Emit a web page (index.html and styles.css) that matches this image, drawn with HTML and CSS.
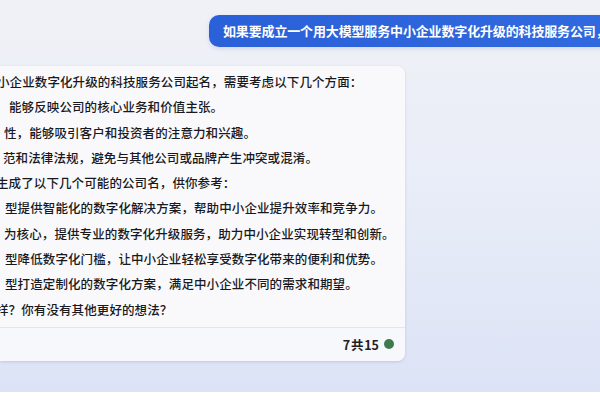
FILE: index.html
```html
<!DOCTYPE html>
<html lang="zh-CN">
<head>
<meta charset="utf-8">
<link rel="stylesheet" href="styles.css">
</head>
<body>
<div class="page">
  <div class="user-row">
    <div class="bubble">如果要成立一个用大模型服务中小企业数字化升级的科技服务公司，请帮我起名</div>
  </div>
  <div class="card">
    <div class="card-body">
      <p class="ln o-m3">小企业数字化升级的科技服务公司起名，需要考虑以下几个方面：</p>
      <p class="ln o-9">能够反映公司的核心业务和价值主张。</p>
      <p class="ln o-4">性，能够吸引客户和投资者的注意力和兴趣。</p>
      <p class="ln o-3">范和法律法规，避免与其他公司或品牌产生冲突或混淆。</p>
      <p class="ln o-m4">生成了以下几个可能的公司名，供你参考：</p>
      <p class="ln o-5">型提供智能化的数字化解决方案，帮助中小企业提升效率和竞争力。</p>
      <p class="ln o-4">为核心，提供专业的数字化升级服务，助力中小企业实现转型和创新。</p>
      <p class="ln o-5">型降低数字化门槛，让中小企业轻松享受数字化带来的便利和优势。</p>
      <p class="ln o-5">型打造定制化的数字化方案，满足中小企业不同的需求和期望。</p>
      <p class="ln o-m4">样？你有没有其他更好的想法？</p>
    </div>
    <div class="card-foot">
      <span class="count">7 共 15</span>
      <span class="dot"></span>
    </div>
  </div>
</div>
</body>
</html>
```

FILE: styles.css
```css
html, body {
  margin: 0;
  padding: 0;
  background: #ffffff;
}
body {
  width: 600px;
  height: 400px;
  overflow: hidden;
  font-family: "Noto Sans CJK SC", "Noto Sans", sans-serif;
}
.page {
  height: 392px;
  overflow: hidden;
  background: linear-gradient(180deg, #f0f1f6 0%, #e9edf8 45%, #dce3f6 100%);
}
.user-row {
  padding-top: 15px;
  padding-left: 209px;
}
.bubble {
  height: 32px;
  line-height: 32px;
  padding-left: 14px;
  white-space: nowrap;
  color: #ffffff;
  font-size: 13px;
  font-weight: 700;
  letter-spacing: -0.15px;
  width: 600px;
  border-radius: 10px;
  background: linear-gradient(90deg, #2b61d8 0%, #336ce2 100%);
  box-shadow: 0 2px 4px rgba(40, 80, 180, 0.15);
}
.card {
  margin-top: 19px;
  width: 405px;
  height: 295px;
  background: #f9f9fc;
  border-radius: 0 8px 8px 0;
  box-shadow: 0 1px 3px rgba(60, 70, 110, 0.18);
  display: flex;
  flex-direction: column;
  overflow: hidden;
}
.card-body {
  padding: 3px 0 5px 0;
  flex: 1;
}
.ln {
  margin: 0;
  white-space: nowrap;
  font-size: 12.5px;
  letter-spacing: 0.1px;
  line-height: 25.3px;
  color: #18191e;
  font-weight: 500;
}
.o-m3 { margin-left: -3px; }
.o-m4 { margin-left: -4px; }
.o-3 { margin-left: 3px; }
.o-4 { margin-left: 4px; }
.o-5 { margin-left: 5px; }
.o-9 { margin-left: 9px; }
.card-foot {
  height: 34px;
  border-top: 1px solid #e3e6ee;
  display: flex;
  justify-content: flex-end;
  align-items: center;
  gap: 5px;
  padding-right: 11px;
  background: #f7f8fb;
}
.count {
  font-family: "Noto Sans CJK SC", "Noto Sans", sans-serif;
  font-size: 12.5px;
  font-weight: 700;
  color: #1f2026;
  word-spacing: -2px;
}
.dot {
  width: 10px;
  height: 10px;
  border-radius: 50%;
  background: #3f7a4d;
}
```
